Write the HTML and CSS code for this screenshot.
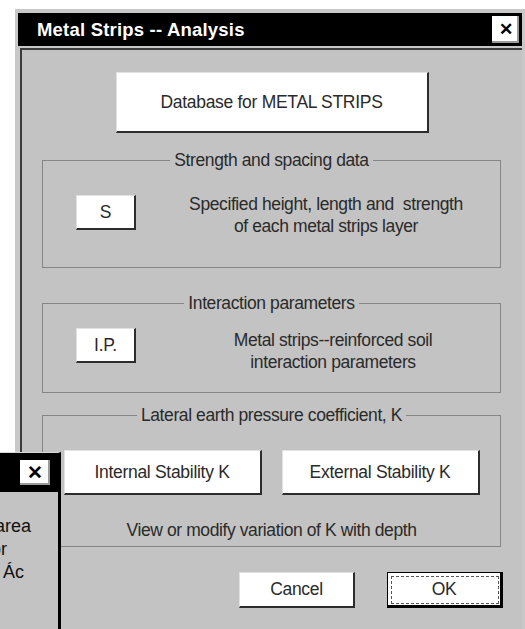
FILE: index.html
```html
<!DOCTYPE html>
<html lang="en">
<head>
    <meta charset="UTF-8">
    <title>Metal Strips -- Analysis</title>
    <link rel="stylesheet" href="styles.css">
</head>
<body>

    <!-- Finestra principale -->
    <div class="window">
        <div class="titlebar">
            <span class="title">Metal Strips -- Analysis</span>
            <span class="close">&#x2715;</span>
        </div>
        <div class="client">
            <div class="db-row">
                <button class="btn btn-db">Database for METAL STRIPS</button>
            </div>

            <fieldset class="group group-s">
                <legend>Strength and spacing data</legend>
                <div class="group-row">
                    <button class="btn btn-small">S</button>
                    <p class="desc desc-s">Specified height, length and&nbsp; strength<br>of each metal strips layer</p>
                </div>
            </fieldset>

            <fieldset class="group group-ip">
                <legend>Interaction parameters</legend>
                <div class="group-row">
                    <button class="btn btn-small">I.P.</button>
                    <p class="desc desc-ip">Metal strips--reinforced soil<br>interaction parameters</p>
                </div>
            </fieldset>

            <fieldset class="group group-k">
                <legend>Lateral earth pressure coefficient, K</legend>
                <div class="k-buttons">
                    <button class="btn btn-k">Internal Stability K</button>
                    <button class="btn btn-k">External Stability K</button>
                </div>
                <p class="k-note">View or modify variation of K with depth</p>
            </fieldset>

            <div class="actions">
                <button class="btn btn-action">Cancel</button>
                <button class="btn btn-action btn-ok">OK</button>
            </div>
        </div>
    </div>

    <!-- Finestra secondaria, parzialmente fuori schermo -->
    <div class="side-window">
        <div class="side-titlebar">
            <span class="close">&#x2715;</span>
        </div>
        <div class="side-body">
            <div>Net area</div>
            <div>factor</div>
            <div>area Ác</div>
        </div>
    </div>

</body>
</html>
```

FILE: styles.css
```css
body {
    margin: 0;
    width: 525px;
    height: 629px;
    overflow: hidden;
    position: relative;
    background-color: #ffffff;
    font-family: 'Liberation Sans', Arial, sans-serif;
    color: #222;
}

.window {
    margin: 9px 0 0 15px;
    padding: 4px 3px 0 3px;
    height: 640px;
    background-color: #c8c8c8;
}

.titlebar {
    height: 33px;
    background-color: #000;
    display: flex;
    align-items: center;
    justify-content: space-between;
    padding: 0 3px 0 19px;
}

.title {
    color: #fff;
    font-weight: bold;
    font-size: 18.5px;
    letter-spacing: 0.2px;
}

.close {
    width: 27px;
    height: 27px;
    background-color: #fff;
    box-shadow: inset -2px -2px 0 #9a9a9a;
    display: flex;
    align-items: center;
    justify-content: center;
    font-size: 17px;
    font-weight: bold;
    color: #000;
}

.client {
    margin: 2px 0 0 2px;
    height: 600px;
    border-top: 2px solid #3c3c3c;
    border-left: 2px solid #3c3c3c;
    background-color: #c3c3c3;
}

.btn {
    font-family: 'Liberation Sans', Arial, sans-serif;
    font-size: 17.5px;
    color: #2a2a2a;
    background-color: #fff;
    border: none;
    border-top: 1px solid #e2e2e2;
    border-left: 1px solid #e2e2e2;
    border-right: 2px solid #2c2c2c;
    border-bottom: 2px solid #2c2c2c;
    padding: 0;
    letter-spacing: -0.3px;
}

.db-row {
    display: flex;
    justify-content: center;
    padding-top: 22px;
}

.btn-db {
    width: 313px;
    height: 61px;
}

.group {
    margin: 0 21px 0 20px;
    border: 1px solid #858585;
    padding: 0;
}

.group legend {
    margin: 0 auto;
    padding: 0 4px;
    font-size: 17.5px;
    line-height: 18px;
    letter-spacing: -0.4px;
    color: #2a2a2a;
}

.group-s {
    margin-top: 18px;
    height: 115px;
}

.group-ip {
    margin-top: 26px;
    height: 97px;
}

.group-k {
    margin-top: 13px;
    height: 139px;
}

.group-row {
    display: flex;
    align-items: flex-start;
    padding-left: 33px;
}

.btn-small {
    width: 60px;
    height: 35px;
}

.desc {
    flex: 1;
    margin: 0;
    text-align: center;
    font-size: 17.5px;
    line-height: 22px;
    letter-spacing: -0.4px;
    color: #2a2a2a;
}

.group-s .btn-small {
    margin-top: 26px;
}

.desc-s {
    margin-top: 24px;
    padding-left: 16px;
}

.group-ip .btn-small {
    margin-top: 16px;
}

.desc-ip {
    margin-top: 17px;
    padding-left: 30px;
}

.k-buttons {
    display: flex;
    justify-content: center;
    gap: 20px;
    padding-top: 26px;
}

.btn-k {
    width: 198px;
    height: 45px;
}

.k-note {
    margin: 25px 0 0;
    line-height: 20px;
    text-align: center;
    font-size: 17.5px;
    letter-spacing: -0.4px;
    color: #2a2a2a;
}

.actions {
    display: flex;
    justify-content: flex-end;
    gap: 32px;
    padding: 25px 19px 0 0;
}

.btn-action {
    width: 116px;
    height: 36px;
}

.btn-ok {
    border-top: 1px solid #000;
    border-left: 1px solid #000;
    border-right: 3px solid #000;
    border-bottom: 3px solid #000;
    outline: 1px dashed #555;
    outline-offset: -5px;
}

.side-window {
    position: absolute;
    left: -50px;
    top: 452px;
    width: 108px;
    height: 190px;
    background-color: #c3c3c3;
    border-top: 1px solid #d8d8d8;
    border-right: 3px solid #000;
}

.side-titlebar {
    height: 39px;
    background-color: #000;
    display: flex;
    align-items: center;
    justify-content: flex-end;
    padding-right: 8px;
}

.side-titlebar .close {
    width: 30px;
    height: 25px;
    font-size: 19px;
}

.side-body {
    padding: 23px 0 0 12px;
    font-size: 18px;
    line-height: 23px;
    color: #111;
}
```
